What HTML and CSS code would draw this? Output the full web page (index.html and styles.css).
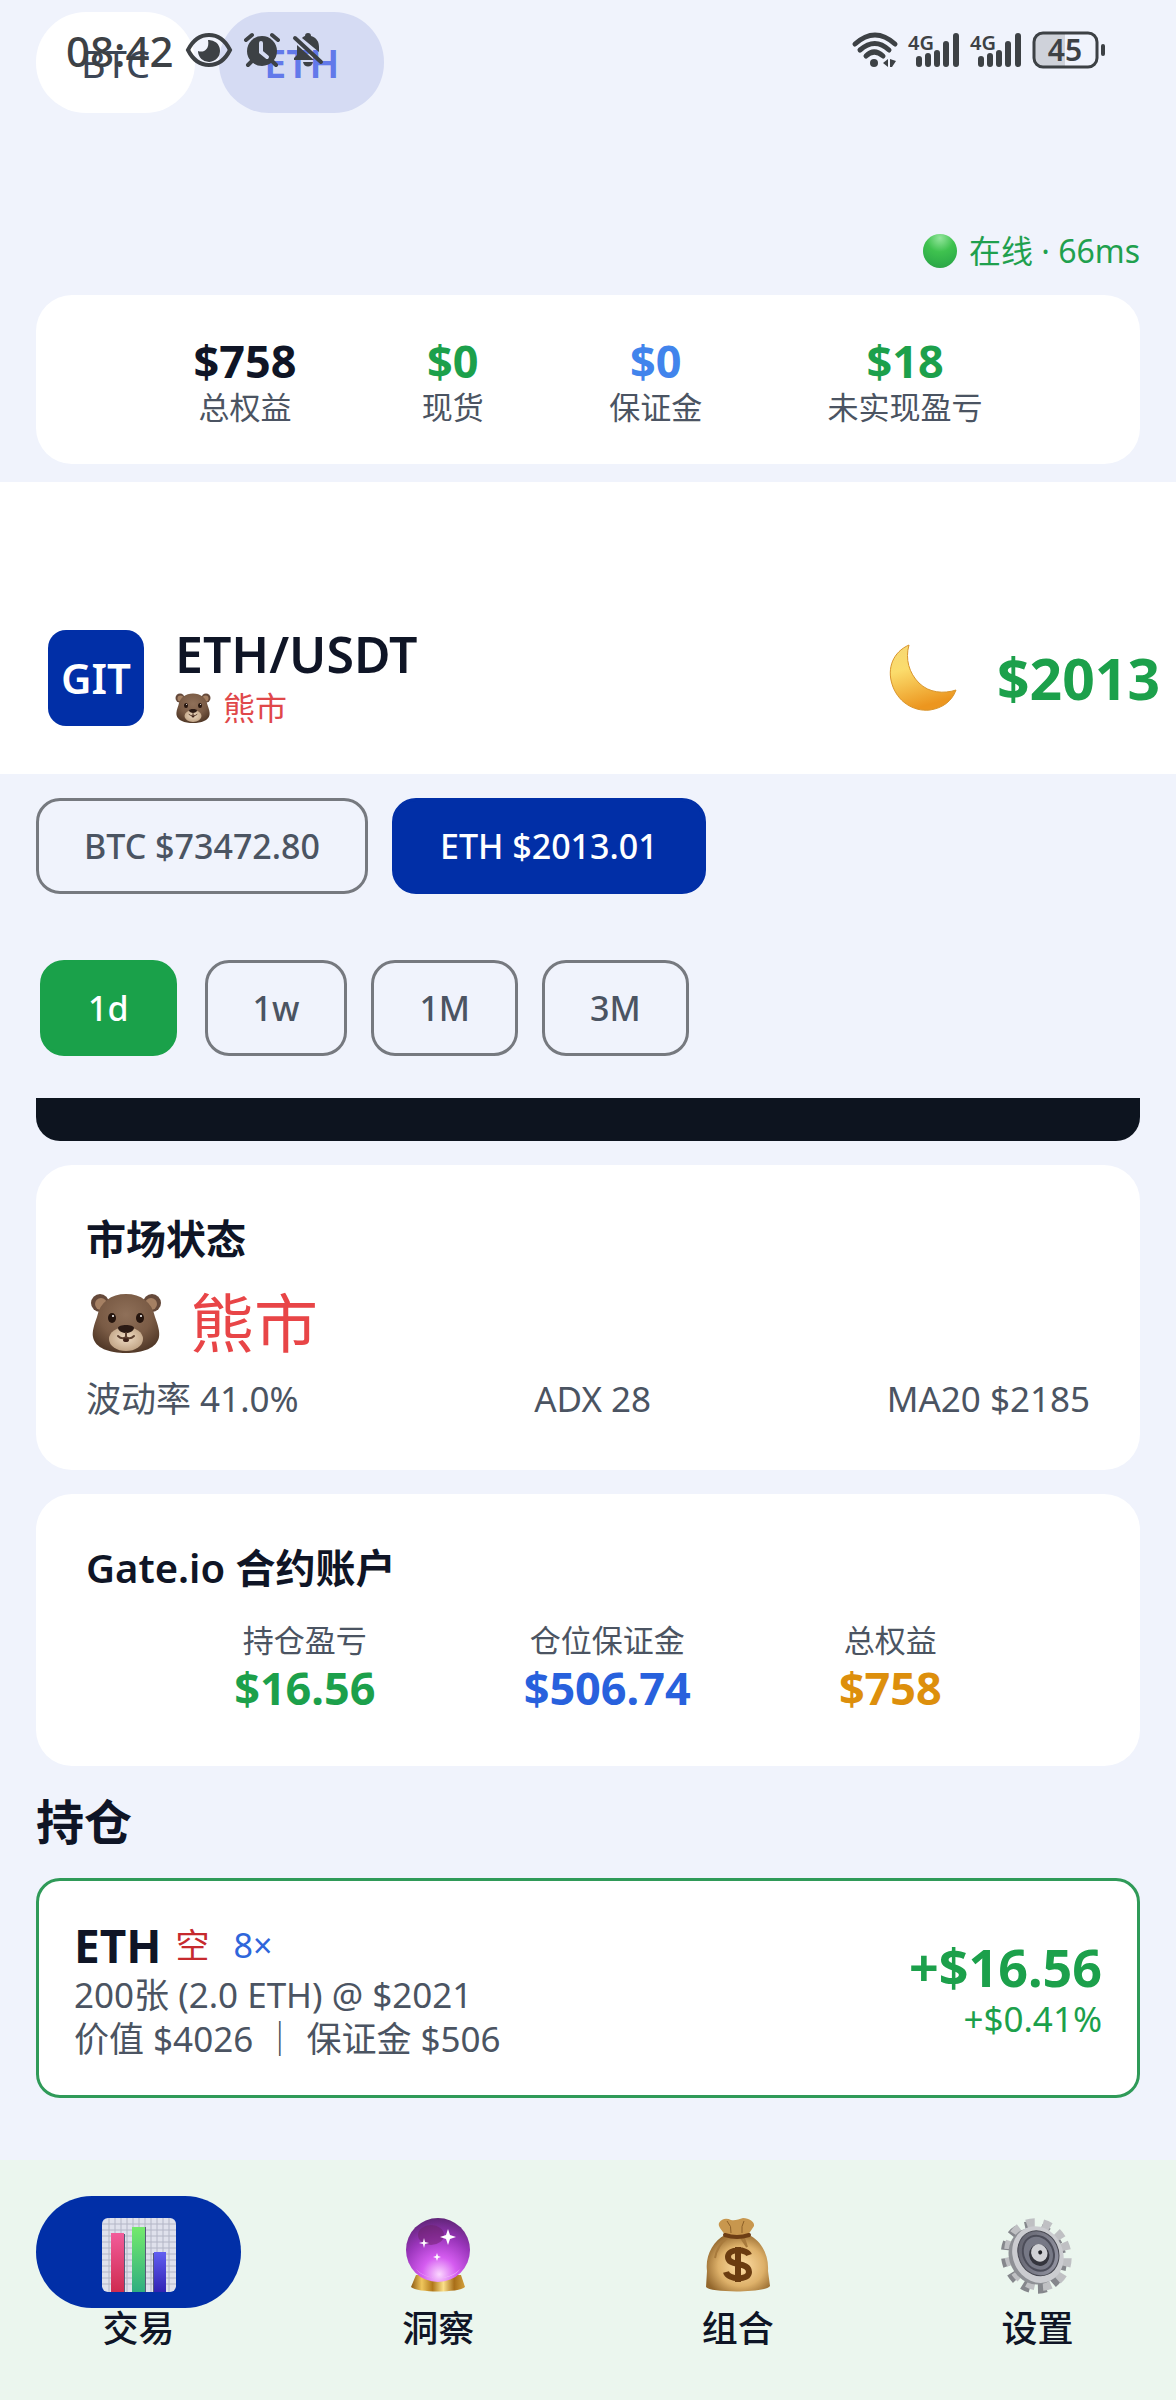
FILE: index.html
```html
<!DOCTYPE html>
<html lang="zh-CN">
<head>
    <meta charset="UTF-8">
    <meta name="viewport" content="width=device-width, initial-scale=1.0">
    <title>ETH/USDT</title>
    <link rel="stylesheet" href="styles.css">
</head>
<body>
    <!-- 公用图形 -->
    <svg width="0" height="0" class="defs" aria-hidden="true">
        <defs>
            <radialGradient id="fur" cx="50%" cy="35%" r="65%">
                <stop offset="0" stop-color="#8f7059"/>
                <stop offset="0.6" stop-color="#7a5b45"/>
                <stop offset="1" stop-color="#533a29"/>
            </radialGradient>
            <radialGradient id="muzzle" cx="50%" cy="45%" r="60%">
                <stop offset="0" stop-color="#efdcc4"/>
                <stop offset="1" stop-color="#bd9f80"/>
            </radialGradient>
            <linearGradient id="moon" x1="0" y1="0" x2="0.3" y2="1">
                <stop offset="0" stop-color="#f6d774"/>
                <stop offset="0.4" stop-color="#fbdc6c"/>
                <stop offset="1" stop-color="#ec961f"/>
            </linearGradient>
            <linearGradient id="red" x1="0" y1="0" x2="0" y2="1">
                <stop offset="0" stop-color="#f25c9a"/>
                <stop offset="1" stop-color="#cf2b50"/>
            </linearGradient>
            <linearGradient id="green" x1="0" y1="0" x2="0" y2="1">
                <stop offset="0" stop-color="#74ea6c"/>
                <stop offset="1" stop-color="#2fae80"/>
            </linearGradient>
            <linearGradient id="blue" x1="0" y1="0" x2="0" y2="1">
                <stop offset="0" stop-color="#625ff0"/>
                <stop offset="1" stop-color="#3122b4"/>
            </linearGradient>
            <radialGradient id="ball" cx="52%" cy="88%" r="90%">
                <stop offset="0" stop-color="#fbd6ff"/>
                <stop offset="0.3" stop-color="#d55cf0"/>
                <stop offset="0.65" stop-color="#9a35bb"/>
                <stop offset="1" stop-color="#5d2474"/>
            </radialGradient>
            <linearGradient id="gold" x1="0" y1="0" x2="1" y2="0">
                <stop offset="0" stop-color="#8d5a14"/>
                <stop offset="0.2" stop-color="#f0c65c"/>
                <stop offset="0.4" stop-color="#b1781b"/>
                <stop offset="0.6" stop-color="#fbe08a"/>
                <stop offset="0.8" stop-color="#a86e18"/>
                <stop offset="1" stop-color="#d3a03b"/>
            </linearGradient>
            <radialGradient id="bag" cx="55%" cy="55%" r="60%">
                <stop offset="0" stop-color="#ffdfa6"/>
                <stop offset="0.6" stop-color="#ddb069"/>
                <stop offset="1" stop-color="#93672d"/>
            </radialGradient>
            <linearGradient id="steel" x1="0" y1="0" x2="1" y2="1">
                <stop offset="0" stop-color="#5b5c67"/>
                <stop offset="1" stop-color="#9a9ba9"/>
            </linearGradient>
            <symbol id="bear" viewBox="0 0 72 60">
                <circle cx="10" cy="10" r="9" fill="#65493a"/>
                <circle cx="62" cy="10" r="9" fill="#65493a"/>
                <circle cx="11" cy="11" r="6" fill="#a58063"/>
                <circle cx="61" cy="11" r="6" fill="#a58063"/>
                <path d="M36 1C51 1 62 9 65 24C68 32 70 39 69 44C67 55 53 60 36 60S5 55 3 44C2 39 4 32 7 24C10 9 21 1 36 1Z" fill="url(#fur)"/>
                <ellipse cx="36" cy="46" rx="17" ry="12" fill="url(#muzzle)"/>
                <ellipse cx="22" cy="25" rx="4" ry="5" fill="#25150e"/>
                <ellipse cx="50" cy="25" rx="4" ry="5" fill="#25150e"/>
                <circle cx="23" cy="23" r="1" fill="#fff"/>
                <circle cx="51" cy="23" r="1" fill="#fff"/>
                <path d="M28 35C28 31 44 31 44 35C44 38 39 40 36 40S28 38 28 35Z" fill="#2b1a14"/>
                <path d="M36 40V44M28 43Q32 47 36 44Q40 47 44 43" fill="none" stroke="#5c4030" stroke-width="2" stroke-linecap="round"/>
                <ellipse cx="36" cy="47" rx="3" ry="2" fill="#3d2118"/>
            </symbol>
        </defs>
    </svg>

    <!-- 系统状态栏，浮在内容之上 -->
    <div class="statusbar">
        <div class="status-left">
            <span class="clock">08:42</span>
            <svg width="46" height="34" viewBox="0 0 46 34">
                <path d="M2 17C7 7 14 2 23 2S39 7 44 17C39 27 32 32 23 32S7 27 2 17Z" fill="none" stroke="currentColor" stroke-width="4"/>
                <path d="M22 7A11 11 0 1 1 12 18C17 20 24 17 22 7Z" fill="currentColor"/>
            </svg>
            <svg width="36" height="34" viewBox="0 0 36 34">
                <circle cx="18" cy="18" r="15" fill="currentColor"/>
                <path d="M2 7L8 2M34 7L28 2M8 28L4 32M28 28L32 32" stroke="currentColor" stroke-width="4" stroke-linecap="round"/>
                <path d="M17 10V19L23 24" fill="none" stroke="#d6dcf2" stroke-width="4" stroke-linecap="round"/>
            </svg>
            <svg width="32" height="34" viewBox="0 0 32 34">
                <path d="M16 0C18 0 19 1 19 3C25 5 27 9 27 14V19L10 5C11 4 12 3 13 3C13 1 14 0 16 0Z" fill="currentColor"/>
                <path d="M5 12L22 27H2V25L5 22ZM11 29H21C20 35 12 35 11 29Z" fill="currentColor"/>
                <path d="M3 5L29 29" stroke="currentColor" stroke-width="4" stroke-linecap="round"/>
            </svg>
        </div>
        <div class="status-right">
            <svg width="46" height="36" viewBox="0 0 46 36">
                <path d="M3 12Q23 -6 43 12M8 18Q23 5 37 18M14 24Q22 16 31 24" fill="none" stroke="currentColor" stroke-width="5" stroke-linecap="round"/>
                <circle cx="22" cy="31" r="4" fill="currentColor"/>
                <path d="M36 27V35L31 31ZM38 27L44 29L40 35H38Z" fill="currentColor"/>
            </svg>
            <svg width="52" height="36" viewBox="0 0 52 36">
                <text x="0" y="18" class="net">4G</text>
                <path d="M11 27V32M20 24V32M29 21V32M38 12V32M48 4V32" stroke="currentColor" stroke-width="6" stroke-linecap="round"/>
            </svg>
            <svg width="52" height="36" viewBox="0 0 52 36">
                <text x="0" y="18" class="net">4G</text>
                <path d="M11 27V32M20 24V32M29 21V32M38 12V32M48 4V32" stroke="currentColor" stroke-width="6" stroke-linecap="round"/>
            </svg>
            <svg width="74" height="38" viewBox="0 0 74 38">
                <path d="M10 2H33V36H10Q2 36 2 28V10Q2 2 10 2Z" fill="#cfd2da"/>
                <rect x="2" y="2" width="63" height="34" rx="9" fill="none" stroke="currentColor" stroke-width="3"/>
                <rect x="69" y="13" width="4" height="12" rx="2" fill="currentColor"/>
                <text x="33" y="30" text-anchor="middle" class="level">45</text>
            </svg>
        </div>
    </div>

    <div class="chips">
        <button type="button" class="chip">BTC</button>
        <button type="button" class="chip active">ETH</button>
    </div>

    <div class="online"><span class="dot"></span>在线 · 66ms</div>

    <section class="summary">
        <div class="stat"><strong>$758</strong><span>总权益</span></div>
        <div class="stat"><strong class="up">$0</strong><span>现货</span></div>
        <div class="stat"><strong class="sky">$0</strong><span>保证金</span></div>
        <div class="stat"><strong class="up">$18</strong><span>未实现盈亏</span></div>
    </section>

    <header class="header">
        <div class="logo">GIT</div>
        <div class="pair">
            <h1>ETH/USDT</h1>
            <div class="mood"><svg width="36" height="30"><use href="#bear"/></svg>熊市</div>
        </div>
        <button type="button" class="theme" aria-label="深色模式">
            <svg width="68" height="68" viewBox="0 0 68 68">
                <path d="M20 1C4 8 -2 24 3 40C8 57 24 68 41 66C54 64 63 57 67 46C55 50 40 49 30 39C20 29 16 15 20 1Z" fill="url(#moon)" stroke="#d9952c" stroke-width="1"/>
            </svg>
        </button>
        <div class="price">$2013</div>
    </header>

    <main class="main">
        <div class="btns">
            <button type="button" class="btn">BTC $73472.80</button>
            <button type="button" class="btn active">ETH $2013.01</button>
        </div>
        <div class="btns periods">
            <button type="button" class="btn active">1d</button>
            <button type="button" class="btn">1w</button>
            <button type="button" class="btn">1M</button>
            <button type="button" class="btn">3M</button>
        </div>

        <div class="chart"></div>

        <section class="card market">
            <h2>市场状态</h2>
            <div class="state"><svg width="72" height="60"><use href="#bear"/></svg>熊市</div>
            <div class="facts"><span>波动率 41.0%</span><span>ADX 28</span><span>MA20 $2185</span></div>
        </section>

        <section class="card account">
            <h2>Gate.io 合约账户</h2>
            <div class="stats">
                <div class="stat"><span>持仓盈亏</span><strong class="up">$16.56</strong></div>
                <div class="stat"><span>仓位保证金</span><strong class="blue">$506.74</strong></div>
                <div class="stat"><span>总权益</span><strong class="orange">$758</strong></div>
            </div>
        </section>

        <h2 class="title">持仓</h2>
        <section class="position">
            <div>
                <div class="name"><strong>ETH</strong><span class="short">空</span><span class="lever">8×</span></div>
                <p>200张 (2.0 ETH) @ $2021</p>
                <p>价值 $4026 ｜ 保证金 $506</p>
            </div>
            <div class="profit">
                <strong>+$16.56</strong>
                <span>+$0.41%</span>
            </div>
        </section>
    </main>

    <nav class="tabbar">
        <a href="#trade" class="active">
            <span class="icon">
                <svg width="74" height="74" viewBox="0 0 74 74">
                    <rect width="74" height="74" rx="6" fill="#dfe1ec"/>
                    <path d="M7 0V74M13 0V74M19 0V74M25 0V74M31 0V74M37 0V74M43 0V74M49 0V74M55 0V74M61 0V74M67 0V74M0 6H74M0 12H74M0 18H74M0 24H74M0 30H74M0 36H74M0 42H74M0 48H74M0 54H74M0 60H74M0 66H74" stroke="#b3b6c6" stroke-width="1"/>
                    <path d="M10 16H23V74H10ZM31 9H44V74H31ZM51 35H53V74H51Z" fill="#555a78"/>
                    <path d="M9 15H22V74H9Z" fill="url(#red)"/>
                    <path d="M30 9H43V74H30Z" fill="url(#green)"/>
                    <path d="M52 34H64V74H52Z" fill="url(#blue)"/>
                </svg>
            </span>
            交易
        </a>
        <a href="#insight">
            <span class="icon">
                <svg width="74" height="74" viewBox="0 0 74 74">
                    <path d="M15 57H60L64 69C58 75 16 75 10 69Z" fill="url(#gold)"/>
                    <circle cx="37" cy="32" r="32" fill="url(#ball)"/>
                    <ellipse cx="30" cy="17" rx="13" ry="10" fill="#6b1f66" opacity="0.5"/>
                    <path d="M15 51C26 63 48 63 59 51C52 63 23 63 15 51Z" fill="#fff" opacity="0.5"/>
                    <path d="M47 11L49 17L55 19L49 21L47 27L45 21L39 19L45 17ZM23 20L24 24L28 25L24 26L23 30L22 26L18 25L22 24ZM36 35L37 38L40 39L37 40L36 43L35 40L32 39L35 38Z" fill="#fff"/>
                </svg>
            </span>
            洞察
        </a>
        <a href="#portfolio">
            <span class="icon">
                <svg width="74" height="74" viewBox="0 0 74 74">
                    <path d="M24 17C19 10 17 8 18 5C21 0 26 0 30 2C34 3 38 1 42 0C48 0 54 4 53 8L47 17Z" fill="#c8974e"/>
                    <path d="M26 3Q31 8 30 15M43 3Q40 8 41 15" fill="none" stroke="#8d6028" stroke-width="1"/>
                    <path d="M24 17H48C61 23 68 38 67 53L69 68C65 75 9 75 5 69L6 53C4 38 12 23 24 17Z" fill="url(#bag)"/>
                    <path d="M26 20Q16 28 14 40M40 20L46 29L43 20" fill="none" stroke="#a87a3c" stroke-width="2"/>
                    <path d="M24 17Q36 21 48 17" fill="none" stroke="#6d3e15" stroke-width="4" stroke-linecap="round"/>
                    <path d="M48 37C46 31 27 30 27 39C27 49 48 43 48 54C48 63 27 62 25 54M37 29V64" fill="none" stroke="#6b3c10" stroke-width="6"/>
                </svg>
            </span>
            组合
        </a>
        <a href="#settings">
            <span class="icon">
                <svg width="74" height="74" viewBox="0 0 74 74">
                    <g transform="rotate(-25 37 37)">
                        <ellipse cx="33" cy="38" rx="27" ry="32" fill="none" stroke="#85878c" stroke-width="10" stroke-dasharray="8 8"/>
                        <ellipse cx="38" cy="37" rx="28" ry="32" fill="none" stroke="#bfc0c3" stroke-width="10" stroke-dasharray="8 8"/>
                        <ellipse cx="34" cy="37" rx="25" ry="29" fill="#8e9095"/>
                        <ellipse cx="38" cy="37" rx="25" ry="29" fill="#cbccd0"/>
                        <ellipse cx="39" cy="36" rx="20" ry="23" fill="url(#steel)" stroke="#484952" stroke-width="1"/>
                        <ellipse cx="39" cy="36" rx="15" ry="18" fill="#777986" stroke="#4c4d59" stroke-width="2"/>
                        <ellipse cx="39" cy="38" rx="10" ry="11" fill="#34353d"/>
                        <ellipse cx="40" cy="36" rx="8" ry="9" fill="#d0d1d5"/>
                        <circle cx="41" cy="36" r="2" fill="#202126"/>
                    </g>
                </svg>
            </span>
            设置
        </a>
    </nav>
</body>
</html>
```

FILE: styles.css
```css
*{
    margin: 0;
    padding: 0;
    box-sizing: border-box;
}
body{
    position: relative;
    display: flex;
    flex-direction: column;
    min-height: 100vh;
    background-color: #f0f3fc;
    color: #0f1526;
    font-family: "Noto Sans", "Noto Sans CJK SC", sans-serif;
    font-size: 34px;
}
button{
    font-family: inherit;
    font-size: 34px;
    border: none;
    background: none;
}
svg{
    display: block;
    flex: none;
    overflow: visible;
}
.defs{
    position: absolute;
}

/* 状态栏 */
.statusbar{
    position: absolute;
    top: 30px;
    left: 0;
    right: 0;
    display: flex;
    justify-content: space-between;
    padding: 0 70px 0 66px;
    color: #3d4145;
}
.status-left,
.status-right{
    display: flex;
    align-items: center;
    height: 40px;
    gap: 12px;
}
.status-right{
    gap: 10px;
}
.clock{
    font-size: 42px;
    font-weight: 500;
}
.net{
    font-size: 20px;
    font-weight: 600;
    fill: currentColor;
}
.level{
    font-size: 30px;
    font-weight: 600;
    fill: currentColor;
}

.chips{
    display: flex;
    gap: 24px;
    padding: 12px 36px 0;
    margin-bottom: 118px;
}
.chip{
    height: 101px;
    padding: 0 45px;
    border-radius: 50px;
    background-color: #ffffff;
    color: #3c4656;
    font-size: 38px;
}
.chip.active{
    background-color: #d5dbf3;
    color: #6279ea;
    font-size: 40px;
    font-weight: 600;
}

.online{
    display: flex;
    justify-content: flex-end;
    align-items: center;
    gap: 12px;
    padding: 0 36px;
    line-height: 40px;
    font-size: 32px;
    color: #1fa04e;
}
.dot{
    width: 34px;
    height: 34px;
    border-radius: 50%;
    background: radial-gradient(circle at 50% 12%, #93e59c, #3fc24f 40%, #2fae49 75%, #2b9b45);
}

/* 权益汇总 */
.summary{
    display: flex;
    justify-content: space-evenly;
    margin: 24px 36px 18px;
    padding: 40px 32px 37px;
    border-radius: 36px;
    background-color: #ffffff;
}
.stat{
    display: flex;
    flex-direction: column;
    align-items: center;
}
.stat strong{
    font-size: 45px;
    line-height: 52px;
}
.stat span{
    font-size: 31px;
    line-height: 40px;
    color: #4b5462;
}
.stat .up{
    color: #1ca04b;
}
.stat .sky{
    color: #4184ec;
}
.stat .blue{
    color: #2861dd;
}
.stat .orange{
    color: #dd8f0c;
}

.header{
    display: flex;
    align-items: center;
    padding: 142px 16px 42px 48px;
    background-color: #ffffff;
}
.logo{
    width: 96px;
    height: 96px;
    margin-right: 31px;
    border-radius: 18px;
    background-color: #012fa7;
    color: #ffffff;
    font-size: 42px;
    font-weight: 600;
    line-height: 96px;
    text-align: center;
}
.pair{
    flex: 1;
}
.pair h1{
    font-size: 50px;
    font-weight: 600;
    line-height: 60px;
}
.mood{
    display: flex;
    align-items: center;
    gap: 12px;
    font-size: 32px;
    line-height: 48px;
    color: #e0484a;
}
.theme{
    margin-right: 40px;
}
.price{
    font-size: 57px;
    font-weight: 700;
    line-height: 72px;
    color: #1ca04b;
}

.main{
    flex: 1;
    padding: 24px 36px 60px;
}
.btns{
    display: flex;
    gap: 24px;
}
.btn{
    height: 96px;
    padding: 0 45px;
    border: 3px solid #76797f;
    border-radius: 24px;
    color: #4b5462;
    font-weight: 500;
}
.btn.active{
    border-color: #012fa7;
    background-color: #012fa7;
    color: #ffffff;
}
.periods{
    margin: 66px 0 42px;
}
.periods .active{
    margin: 0 4px;
    border-color: #1aa14a;
    background-color: #1aa14a;
}
.chart{
    height: 43px;
    border-radius: 0 0 24px 24px;
    background-color: #0d141f;
}

.card{
    margin-top: 24px;
    padding: 50px;
    border-radius: 36px;
    background-color: #ffffff;
}
.card h2{
    font-size: 40px;
    font-weight: 600;
    line-height: 48px;
}
.market{
    padding-bottom: 47px;
}
.state{
    display: flex;
    align-items: center;
    gap: 28px;
    padding-left: 4px;
    margin: 20px 0 12px;
    font-size: 64px;
    line-height: 80px;
    color: #e84547;
}
.facts{
    display: flex;
    justify-content: space-between;
    font-size: 35px;
    line-height: 48px;
    color: #4b5462;
}
.stats{
    display: flex;
    justify-content: space-evenly;
    margin-top: 28px;
}
.account .stat strong{
    line-height: 56px;
}

/* 持仓 */
.title{
    margin: 24px 0;
    font-size: 48px;
    line-height: 64px;
}
.position{
    display: flex;
    justify-content: space-between;
    align-items: center;
    padding: 36px 35px 34px;
    border: 3px solid #2f9a58;
    border-radius: 24px;
    background-color: #ffffff;
}
.name{
    display: flex;
    align-items: center;
    line-height: 56px;
}
.name strong{
    font-size: 46px;
}
.short{
    margin: 0 24px 0 14px;
    color: #c62a2e;
}
.lever{
    color: #2f66db;
}
.position p{
    font-size: 35px;
    line-height: 44px;
    color: #4b5462;
}
.profit{
    display: flex;
    flex-direction: column;
    align-items: flex-end;
    color: #1ca04b;
}
.profit strong{
    font-size: 52px;
    line-height: 60px;
}
.profit span{
    font-size: 35px;
    line-height: 44px;
}

/* 底部导航 */
.tabbar{
    display: flex;
    justify-content: space-between;
    padding: 36px 36px 50px;
    background-color: #ebf6ee;
}
.tabbar a{
    display: flex;
    flex-direction: column;
    align-items: center;
    font-size: 36px;
    font-weight: 500;
    line-height: 42px;
    color: #0f1526;
    text-decoration: none;
}
.icon{
    display: flex;
    justify-content: center;
    align-items: center;
    width: 205px;
    height: 112px;
    padding-top: 6px;
    border-radius: 56px;
}
.tabbar .active .icon{
    background-color: #012fa7;
}
```
